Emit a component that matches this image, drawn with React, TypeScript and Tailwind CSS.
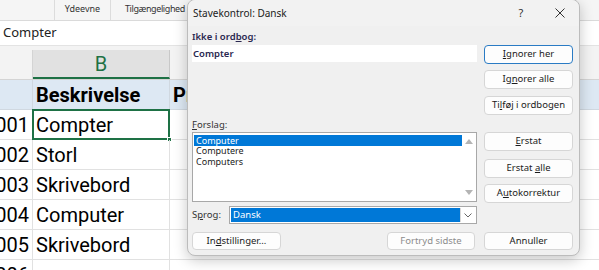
import React from "react";

const U = ({ children }: { children: React.ReactNode }) => <span className="underline underline-offset-[1px]">{children}</span>;

function Btn({ children, def, disabled, className = "" }: { children: React.ReactNode; def?: boolean; disabled?: boolean; className?: string }) {
  return (
    <div
      className={
        "flex items-center justify-center rounded-[4px] bg-[#fdfdfd] text-[9.5px] " +
        (def ? "border-[1.5px] border-[#2a7bc4] " : "border border-[#d6d6d6] ") +
        (disabled ? "text-[#8c8c8c] " : "text-[#1b1b1b] ") +
        className
      }
    >
      <span className="whitespace-pre">{children}</span>
    </div>
  );
}

const rows = [
  ["1001", "Compter"],
  ["1002", "Storl"],
  ["1003", "Skrivebord"],
  ["1004", "Computer"],
  ["1005", "Skrivebord"],
  ["1006", ""],
];

export default function App() {
  return (
    <div className="relative w-[599px] h-[270px] overflow-hidden bg-white" style={{ fontFamily: "Roboto, 'Noto Sans', sans-serif" }}>
      {/* ribbon */}
      <div className="h-[21px] bg-[#f5f5f5] border-b border-[#dadada] flex text-[9px] text-[#333]" style={{ fontFamily: "'Noto Sans', sans-serif" }}>
        <div className="w-[55px] h-full border-r border-[#dcdcdc]" />
        <div className="w-[56px] h-full border-r border-[#dcdcdc] flex items-center justify-center pb-[2px]">Ydeevne</div>
        <div className="pl-[14px] flex items-center pb-[2px] tracking-[-0.4px] whitespace-nowrap">Tilgængelighed</div>
      </div>
      {/* formula bar */}
      <div className="h-[25px] bg-white border-b border-[#e3e3e3] flex items-center pl-[3px] text-[13px] text-[#222]" style={{ fontFamily: "'Noto Sans', sans-serif" }}>
        Compter
      </div>
      <div className="h-[4px] bg-[#f3f3f3]" />
      {/* column headers */}
      <div className="h-[30px] flex bg-[#f3f3f3] border-b border-[#d4d4d4]">
        <div className="w-[33px] border-r border-[#d4d4d4]" />
        <div className="w-[137px] bg-[#e1e1e1] border-r border-[#c8c8c8] border-b-2 border-b-[#1e7145] text-[#1e7145] text-[20px] flex items-center justify-center">B</div>
        <div className="flex-1" />
      </div>
      {/* header row */}
      <div className="h-[30px] flex bg-[#dde8f3] border-b border-[#d0d8e0] text-[20px] font-bold text-black">
        <div className="w-[33px] border-r border-[#d0d8e0]" />
        <div className="w-[137px] border-r border-[#d0d8e0] pl-[3px] flex items-center">Beskrivelse</div>
        <div className="flex-1 pl-[3px] flex items-center">Pris</div>
      </div>
      {rows.map(([a, b], i) => (
        <div key={i} className="h-[30px] flex border-b border-[#e1e1e1] text-[20px] text-black">
          <div className="w-[33px] border-r border-[#e1e1e1] overflow-hidden flex items-center justify-end pr-[3px]">{a}</div>
          <div className="relative w-[137px] border-r border-[#e1e1e1] pl-[3px] flex items-center">
            {b}
            {i === 0 && (
              <>
                <div className="absolute left-[-1px] top-[-1px] right-[-1px] bottom-[-1px] border-2 border-[#1e7145]" />
                <div className="absolute right-[-3px] bottom-[-3px] w-[5px] h-[5px] bg-[#1e7145] border border-white" />
              </>
            )}
          </div>
          <div className="flex-1" />
        </div>
      ))}

      {/* dialog */}
      <div
        className="absolute left-[187px] top-[-1px] w-[393px] h-[257px] rounded-[8px] border border-[#bcbcbc] bg-[#f0f0f0] shadow-[0_4px_14px_rgba(0,0,0,0.22)] text-[#1b1b1b]"
        style={{ fontFamily: "'Noto Sans', sans-serif" }}
      >
        <div className="h-[26px] flex items-center pl-[5px] bg-[#f2f2f2] rounded-t-[8px]">
          <div className="text-[10px] text-[#1b1b1b]">Stavekontrol: Dansk</div>
          <div className="ml-auto w-[40px] text-center text-[11px] text-[#333]">?</div>
          <div className="w-[38px] flex items-center justify-center">
            <svg width="10" height="10" viewBox="0 0 10 10">
              <path d="M0.5 0.5 L9.5 9.5 M9.5 0.5 L0.5 9.5" stroke="#333" strokeWidth="1" />
            </svg>
          </div>
        </div>
        <div className="flex pl-[4px]">
          {/* left column */}
          <div className="w-[285px] flex flex-col">
            <div className="mt-[4px] h-[14px] leading-[14px] text-[9.5px] font-semibold text-[#2a2850]">
              Ikke i ord<U>b</U>og:
            </div>
            <div className="mt-[1px] h-[17px] bg-white pl-[1px] leading-[17px] text-[9.5px] font-semibold text-[#2a2850]">Compter</div>
            <div className="mt-[56px] h-[14px] leading-[14px] text-[9.5px] text-[#333]">
              <U>F</U>orslag:
            </div>
            <div className="h-[70px] border border-[#a8a8a8] bg-white flex">
              <div className="flex-1 pt-[2px] pl-[1px] text-[9px]">
                <div className="h-[11px] leading-[11px] bg-[#0078d7] text-white pl-[2px]">Computer</div>
                <div className="h-[10.5px] leading-[10.5px] pl-[2px] text-[#1b1b1b]">Computere</div>
                <div className="h-[10.5px] leading-[10.5px] pl-[2px] text-[#1b1b1b]">Computers</div>
              </div>
              <div className="w-[14px] flex flex-col items-center justify-between py-[6px]">
                <svg width="8" height="5" viewBox="0 0 8 5"><path d="M0 5 L4 0 L8 5 Z" fill="#b4b4b4" /></svg>
                <svg width="8" height="5" viewBox="0 0 8 5"><path d="M0 0 L4 5 L8 0 Z" fill="#b4b4b4" /></svg>
              </div>
            </div>
            <div className="mt-[4px] h-[18px] flex items-center">
              <div className="w-[37px] text-[9.5px] text-[#333]">
                S<U>p</U>rog:
              </div>
              <div className="flex-1 h-full border border-[#a8a8a8] bg-white flex p-[1px]">
                <div className="flex-1 bg-[#0078d7] text-white text-[9.5px] leading-[14px] pl-[2px]">Dansk</div>
                <div className="w-[15px] flex items-center justify-center border-l border-[#d8d8d8]">
                  <svg width="8" height="5" viewBox="0 0 8 5"><path d="M0.5 0.5 L4 4 L7.5 0.5" stroke="#666" strokeWidth="1" fill="none" /></svg>
                </div>
              </div>
            </div>
            <div className="mt-[8px] flex justify-between pr-[2px]">
              <Btn className="w-[89px] h-[18px]">
                In<U>d</U>stillinger...
              </Btn>
              <Btn disabled className="w-[88px] h-[18px]">Fortryd sidste</Btn>
            </div>
          </div>
          {/* right column */}
          <div className="ml-[7px] w-[89px] flex flex-col">
            <Btn def className="mt-[19px] h-[19px]">
              <U>I</U>gnorer her
            </Btn>
            <Btn className="mt-[6px] h-[19px]">
              Ig<U>n</U>orer alle
            </Btn>
            <Btn className="mt-[7px] h-[19px]">
              Ti<U>l</U>føj i ordbogen
            </Btn>
            <Btn className="mt-[17px] h-[19px]">
              <U>E</U>rstat
            </Btn>
            <Btn className="mt-[8px] h-[19px]">
              Erstat <U>a</U>lle
            </Btn>
            <Btn className="mt-[6px] h-[19px]">
              A<U>u</U>tokorrektur
            </Btn>
            <Btn className="mt-[29px] h-[18px]">Annuller</Btn>
          </div>
        </div>
      </div>
    </div>
  );
}
